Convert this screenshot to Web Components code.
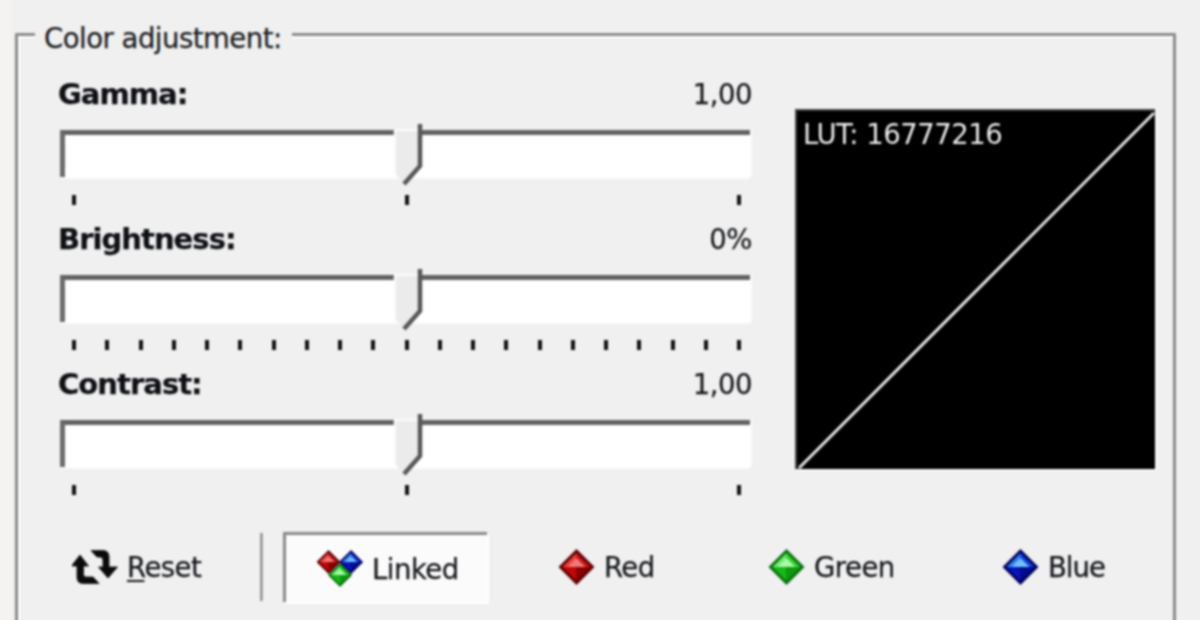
<!DOCTYPE html>
<html><head><meta charset="utf-8"><style>
html,body{margin:0;height:620px;overflow:hidden;background:#f0f0f0}
body{font:27.5px "DejaVu Sans",sans-serif;color:#14161a;letter-spacing:-.5px;-webkit-text-stroke:.25px currentColor}
</style></head><body>
<color-panel title="Color adjustment:">
  <div slot="sliders">
    <lut-slider label="Gamma:" value="1,00" ticks="3"></lut-slider>
    <lut-slider label="Brightness:" value="0%" ticks="21"></lut-slider>
    <lut-slider label="Contrast:" value="1,00" ticks="3"></lut-slider>
  </div>
  <lut-graph slot="graph" text="LUT: 16777216"></lut-graph>
  <channel-bar slot="bar"></channel-bar>
</color-panel>
<script>
class ColorPanel extends HTMLElement{constructor(){super();const s=this.attachShadow({mode:'open'});
s.innerHTML=`<style>
:host{display:block;padding:33px 24px 0 15px;height:587px;background:linear-gradient(90deg,#f4f3f1 0,#f4f3f1 11px,#f0f0f0 12px)}
.box{position:relative;box-sizing:border-box;height:600px;border:3px solid #8a8a8a;border-bottom:0;border-radius:2px 2px 0 0;box-shadow:inset 2px 2px 0 #fff;padding:43px 18px 0 40px;filter:blur(.8px)}
.legend{position:absolute;left:17px;top:-16px;background:#f0f0f0;padding:0 10px 0 9px;line-height:36px;color:#1e2024}
.top{display:flex;justify-content:space-between}
::slotted([slot=sliders]){width:694px}
</style><div class="box"><div class="legend"></div><div class="top"><slot name="sliders"></slot><slot name="graph"></slot></div><slot name="bar"></slot></div>`;
s.querySelector('.legend').textContent=this.getAttribute('title');}}
customElements.define('color-panel',ColorPanel);

class LutSlider extends HTMLElement{constructor(){super();const s=this.attachShadow({mode:'open'});
const n=+this.getAttribute('ticks');let t='';for(let i=0;i<n;i++)t+='<i></i>';
s.innerHTML=`<style>
:host{display:block;height:145px}
.head{display:flex;justify-content:space-between;height:30px;line-height:30px;margin-bottom:21px}
b{font-weight:700;font-size:29px;color:#0e1014;letter-spacing:-.95px}
.track{position:relative;box-sizing:border-box;height:47px;margin:0 2px 0 2px;background:#fff;border-top:5px solid #626262;border-left:5px solid #6c6c6c;box-shadow:0 2px 0 #fbfbfb,2px 0 0 #fbfbfb}
svg{position:absolute;left:326px;top:-11px}
.ticks{display:flex;justify-content:space-between;padding:18px 11px 0 14px}
i{display:block;width:4px;height:10px;background:#111}
</style><div class="head"><b></b><span></span></div>
<div class="track"><svg width="34" height="68" viewBox="0 0 34 68">
<path d="M4 6H30V42L14 60 4 50Z" fill="#ebebeb" stroke="none"/>
<path d="M4 51V6H28" fill="none" stroke="#fafafa" stroke-width="2.5"/>
<path d="M29 0V42L13 60" fill="none" stroke="#585858" stroke-width="4.5"/>
</svg></div><div class="ticks">${t}</div>`;
s.querySelector('b').textContent=this.getAttribute('label');
s.querySelector('span').textContent=this.getAttribute('value');}}
customElements.define('lut-slider',LutSlider);

class LutGraph extends HTMLElement{constructor(){super();const s=this.attachShadow({mode:'open'});
s.innerHTML=`<style>
:host{display:block;position:relative;box-sizing:border-box;width:360px;height:360px;margin-top:30px;background:#000;border-top:2px solid #444;border-left:2px solid #444;box-shadow:2px 2px 0 #fafafa;-webkit-text-stroke:0}
span{display:block;padding:5px 0 0 6px;line-height:36px;color:#ececec}
svg{position:absolute;left:0;top:0}
</style><svg width="358" height="358" viewBox="0 0 358 358"><path d="M2 357L357 2" stroke="#e6e6e6" stroke-width="3"/></svg><span></span>`;
s.querySelector('span').textContent=this.getAttribute('text');}}
customElements.define('lut-graph',LutGraph);

const gem=(c)=>`<path d="M18 0L36 18 18 36 0 18Z" fill="${c[0]}"/><path d="M18 4L32 18 18 18Z" fill="${c[1]}"/><path d="M18 4L4 18 18 18Z" fill="${c[2]}"/><path d="M4 18L18 32 18 18Z" fill="${c[3]}"/><path d="M32 18L18 32 18 18Z" fill="${c[4]}"/><path d="M18 9L27 18H9Z" fill="${c[5]}"/>`;
const RED=['#5e0000','#c81414','#ee4040','#c00808','#8c0000','#f07878'];
const GREEN=['#08700c','#30d030','#70ec70','#18b818','#109810','#a8f8a8'];
const BLUE=['#000060','#1040d8','#3080f0','#0a14b8','#000c90','#70c0ff'];

class ChannelBar extends HTMLElement{constructor(){super();const s=this.attachShadow({mode:'open'});
s.innerHTML=`<style>
:host{display:flex;align-items:center;height:70px;margin:18px 0 0 -3px}
.b{display:flex;align-items:center;box-sizing:border-box;height:70px}
.sep{width:3px;height:68px;background:#9a9a9a;box-shadow:1px 0 0 #fff}
.on{background:#fbfbfb;border-top:3px solid #8a8a8a;border-left:3px solid #8a8a8a;box-shadow:2px 2px 0 #fff}
u{text-decoration-thickness:2px;text-underline-offset:3px}
svg{display:block;flex:none}
</style>
<div class="b" style="width:205px;padding-left:17px;gap:9px">
<svg width="46" height="36" viewBox="0 0 46 36"><path fill="#0a0a0a" stroke="#0a0a0a" stroke-width=".8" d="M8 6L16.5 17H11.5V26Q12 28 14 28H21L27 34.5H11Q5 34.5 5 28V17H-.5Z"/><path fill="#0a0a0a" stroke="#0a0a0a" stroke-width=".8" d="M19 1.5H31Q37 1.5 37 8V18H45.5L36 29 26.5 18H31V11Q31 8 28 8H25Z"/></svg>
<span><u>R</u>eset</span></div>
<div class="sep" style="margin-right:20px"></div>
<div class="b on" style="width:204px;padding-left:31px;gap:9px">
<svg width="46" height="38" viewBox="0 0 46 38"><g transform="translate(-.5,0) scale(.67)">${gem(RED)}</g><g transform="translate(22,0) scale(.67)">${gem(BLUE)}</g><g transform="translate(11,13) scale(.67)">${gem(GREEN)}</g></svg>
<span>Linked</span></div>
<div class="b" style="width:281px;padding-left:71px;gap:9px"><svg width="37" height="36" viewBox="0 0 36 36">${gem(RED)}</svg><span>Red</span></div>
<div class="b" style="width:234px;gap:9px"><svg width="37" height="36" viewBox="0 0 36 36">${gem(GREEN)}</svg><span>Green</span></div>
<div class="b" style="gap:9px"><svg width="37" height="36" viewBox="0 0 36 36">${gem(BLUE)}</svg><span style="letter-spacing:-1px">Blue</span></div>`;}}
customElements.define('channel-bar',ChannelBar);
</script></body></html>
